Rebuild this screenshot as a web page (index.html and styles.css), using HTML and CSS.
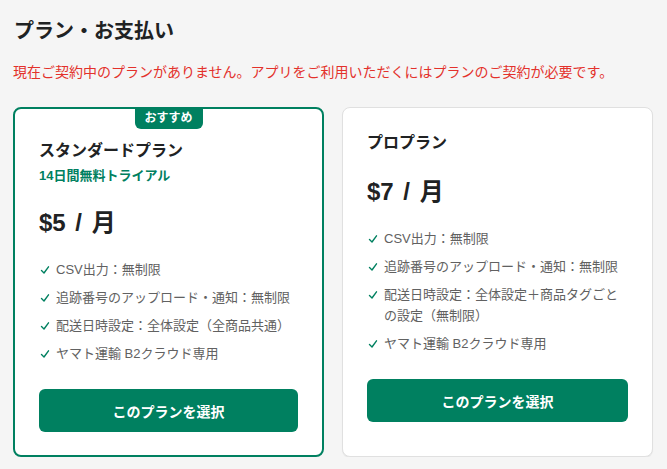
FILE: index.html
```html
<!DOCTYPE html>
<html lang="ja">
<head>
<meta charset="utf-8">
<title>プラン・お支払い</title>
<link rel="stylesheet" href="styles.css">
</head>
<body>
<main class="page">
  <h1 class="page-title">プラン・お支払い</h1>
  <p class="notice">現在ご契約中のプランがありません。アプリをご利用いただくにはプランのご契約が必要です。</p>
  <div class="plans">
    <section class="plan plan--featured">
      <span class="badge">おすすめ</span>
      <h2 class="plan-name">スタンダードプラン</h2>
      <p class="trial">14日間無料トライアル</p>
      <p class="price">$5 / 月</p>
      <ul class="features">
        <li><svg class="check" viewBox="0 0 10 10"><path d="M1.5 5.6 L4 8 L8.5 1.8"/></svg><span>CSV出力：無制限</span></li>
        <li><svg class="check" viewBox="0 0 10 10"><path d="M1.5 5.6 L4 8 L8.5 1.8"/></svg><span>追跡番号のアップロード・通知：無制限</span></li>
        <li><svg class="check" viewBox="0 0 10 10"><path d="M1.5 5.6 L4 8 L8.5 1.8"/></svg><span>配送日時設定：全体設定（全商品共通）</span></li>
        <li><svg class="check" viewBox="0 0 10 10"><path d="M1.5 5.6 L4 8 L8.5 1.8"/></svg><span>ヤマト運輸 B2クラウド専用</span></li>
      </ul>
      <button class="select-btn" type="button">このプランを選択</button>
    </section>
    <section class="plan">
      <h2 class="plan-name">プロプラン</h2>
      <p class="price">$7 / 月</p>
      <ul class="features">
        <li><svg class="check" viewBox="0 0 10 10"><path d="M1.5 5.6 L4 8 L8.5 1.8"/></svg><span>CSV出力：無制限</span></li>
        <li><svg class="check" viewBox="0 0 10 10"><path d="M1.5 5.6 L4 8 L8.5 1.8"/></svg><span>追跡番号のアップロード・通知：無制限</span></li>
        <li><svg class="check" viewBox="0 0 10 10"><path d="M1.5 5.6 L4 8 L8.5 1.8"/></svg><span>配送日時設定：全体設定＋商品タグごとの設定（無制限）</span></li>
        <li><svg class="check" viewBox="0 0 10 10"><path d="M1.5 5.6 L4 8 L8.5 1.8"/></svg><span>ヤマト運輸 B2クラウド専用</span></li>
      </ul>
      <button class="select-btn" type="button">このプランを選択</button>
    </section>
  </div>
</main>
</body>
</html>
```

FILE: styles.css
```css
* { box-sizing: border-box; }

html, body {
  margin: 0;
  padding: 0;
  background: #f5f5f5;
}

body {
  font-family: "Liberation Sans", "Noto Sans CJK JP", sans-serif;
  color: #202223;
}

.page {
  padding: 17px 14px 0 13px;
}

.page-title {
  margin: 0 0 0 1px;
  font-size: 20px;
  line-height: 28px;
  font-weight: 700;
  color: #202223;
}

.notice {
  margin: 17px 0 0;
  font-size: 14px;
  line-height: 20px;
  color: #e3312b;
}

.plans {
  margin-top: 25px;
  display: grid;
  grid-template-columns: 311px 311px;
  column-gap: 18px;
  align-items: stretch;
}

.plan {
  position: relative;
  background: #ffffff;
  border: 1px solid #e0e0e0;
  border-radius: 8px;
  padding: 24px 24px 23px;
  box-shadow: 0 1px 1px rgba(0, 0, 0, 0.06);
}

.plan--featured {
  border: 2px solid #008060;
  padding: 31px 24px 23px;
  box-shadow: none;
}

.badge {
  position: absolute;
  top: -2px;
  left: 50%;
  transform: translateX(-50%);
  height: 22px;
  padding: 0 10px;
  background: #008060;
  color: #ffffff;
  font-size: 12px;
  line-height: 22px;
  font-weight: 700;
  border-radius: 0 0 6px 6px;
  white-space: nowrap;
}

.plan-name {
  margin: 0;
  font-size: 16px;
  line-height: 22px;
  font-weight: 700;
  color: #202223;
}

.trial {
  margin: 5px 0 0;
  font-size: 13px;
  line-height: 18px;
  font-weight: 700;
  color: #008060;
}

.price {
  margin: 22px 0 0;
  font-size: 24px;
  line-height: 32px;
  font-weight: 700;
  word-spacing: 3px;
  color: #202223;
}

.features {
  list-style: none;
  margin: 20px 0 0;
  padding: 0;
  display: flex;
  flex-direction: column;
  gap: 7px;
}

.features li {
  display: flex;
  align-items: flex-start;
  gap: 6px;
  font-size: 13px;
  line-height: 21px;
  color: #616161;
}

.check {
  flex: none;
  width: 10px;
  height: 10px;
  margin: 6px 0 0 1px;
  fill: none;
  stroke: #008060;
  stroke-width: 1.4;
  stroke-linecap: round;
  stroke-linejoin: round;
}

.select-btn {
  display: block;
  width: 100%;
  height: 43px;
  margin-top: 25px;
  border: none;
  border-radius: 6px;
  background: #008060;
  color: #ffffff;
  font-family: inherit;
  font-size: 14px;
  font-weight: 700;
  cursor: pointer;
}
```
